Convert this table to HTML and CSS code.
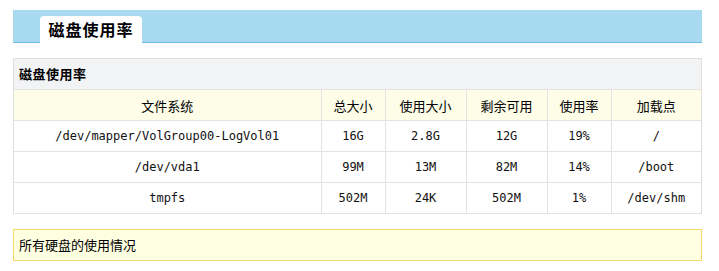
FILE: index.html
```html
<!DOCTYPE html>
<html>
<head>
<meta charset="utf-8">
<link rel="stylesheet" href="styles.css">
</head>
<body>
<div class="page">
  <div class="tabbar">
    <div class="tab">磁盘使用率</div>
  </div>
  <div class="panel">
    <div class="panel-title">磁盘使用率</div>
    <table class="grid">
      <colgroup>
        <col class="c1"><col class="c2"><col class="c3"><col class="c4"><col class="c5"><col class="c6">
      </colgroup>
      <thead>
        <tr><th>文件系统</th><th>总大小</th><th>使用大小</th><th>剩余可用</th><th>使用率</th><th>加载点</th></tr>
      </thead>
      <tbody>
        <tr><td>/dev/mapper/VolGroup00-LogVol01</td><td>16G</td><td>2.8G</td><td>12G</td><td>19%</td><td>/</td></tr>
        <tr><td>/dev/vda1</td><td>99M</td><td>13M</td><td>82M</td><td>14%</td><td>/boot</td></tr>
        <tr><td>tmpfs</td><td>502M</td><td>24K</td><td>502M</td><td>1%</td><td>/dev/shm</td></tr>
      </tbody>
    </table>
  </div>
  <div class="note">所有硬盘的使用情况</div>
</div>
</body>
</html>
```
FILE: styles.css
```css
html, body { margin: 0; padding: 0; background: #fff; }
body { font-family: "Noto Sans CJK SC", "DejaVu Sans", sans-serif; color: #000; }
.page { padding: 10px 17px 0 13px; }
.tabbar {
  height: 32px;
  background: #a7d9ef;
  border-bottom: 1px solid #6dbde6;
  display: flex;
  align-items: flex-end;
  padding-left: 27px;
}
.tab {
  width: 102px;
  height: 27px;
  margin-bottom: -1px;
  background: #fff;
  border-radius: 4px 4px 0 0;
  font-size: 16px;
  font-weight: bold;
  line-height: 27px;
  padding-top: 0;
  box-sizing: border-box;
  text-align: center;
  letter-spacing: 1px;
}
.panel {
  margin-top: 15px;
  border: 1px solid #dfdfdf;
  border-bottom: none;
}
.panel-title {
  height: 30px;
  line-height: 30px;
  background: #f2f3f5;
  padding-left: 5px;
  font-size: 13px;
  font-weight: bold;
  letter-spacing: 0.5px;
}
.grid {
  width: 100%;
  border-collapse: collapse;
  table-layout: fixed;
}
.c1 { width: 307px; }
.c2 { width: 64px; }
.c3 { width: 81px; }
.c4 { width: 81px; }
.c5 { width: 64px; }
.grid th, .grid td {
  height: 30px;
  padding: 0;
  border: 1px solid #e3e3e3;
  text-align: center;
  vertical-align: middle;
}
.grid tr > :first-child { border-left: none; }
.grid tr > :last-child { border-right: none; }
.grid th {
  background: #fefde8;
  font-weight: normal;
  font-size: 13px;
}
.grid td {
  font-family: "DejaVu Sans Mono", "Noto Sans CJK SC", monospace;
  font-size: 12px;
  color: #111;
}
.note {
  margin-top: 15px;
  height: 30px;
  line-height: 30px;
  background: #ffffe1;
  border: 1px solid #f6d86c;
  padding-left: 5px;
  font-size: 13px;
}
```
